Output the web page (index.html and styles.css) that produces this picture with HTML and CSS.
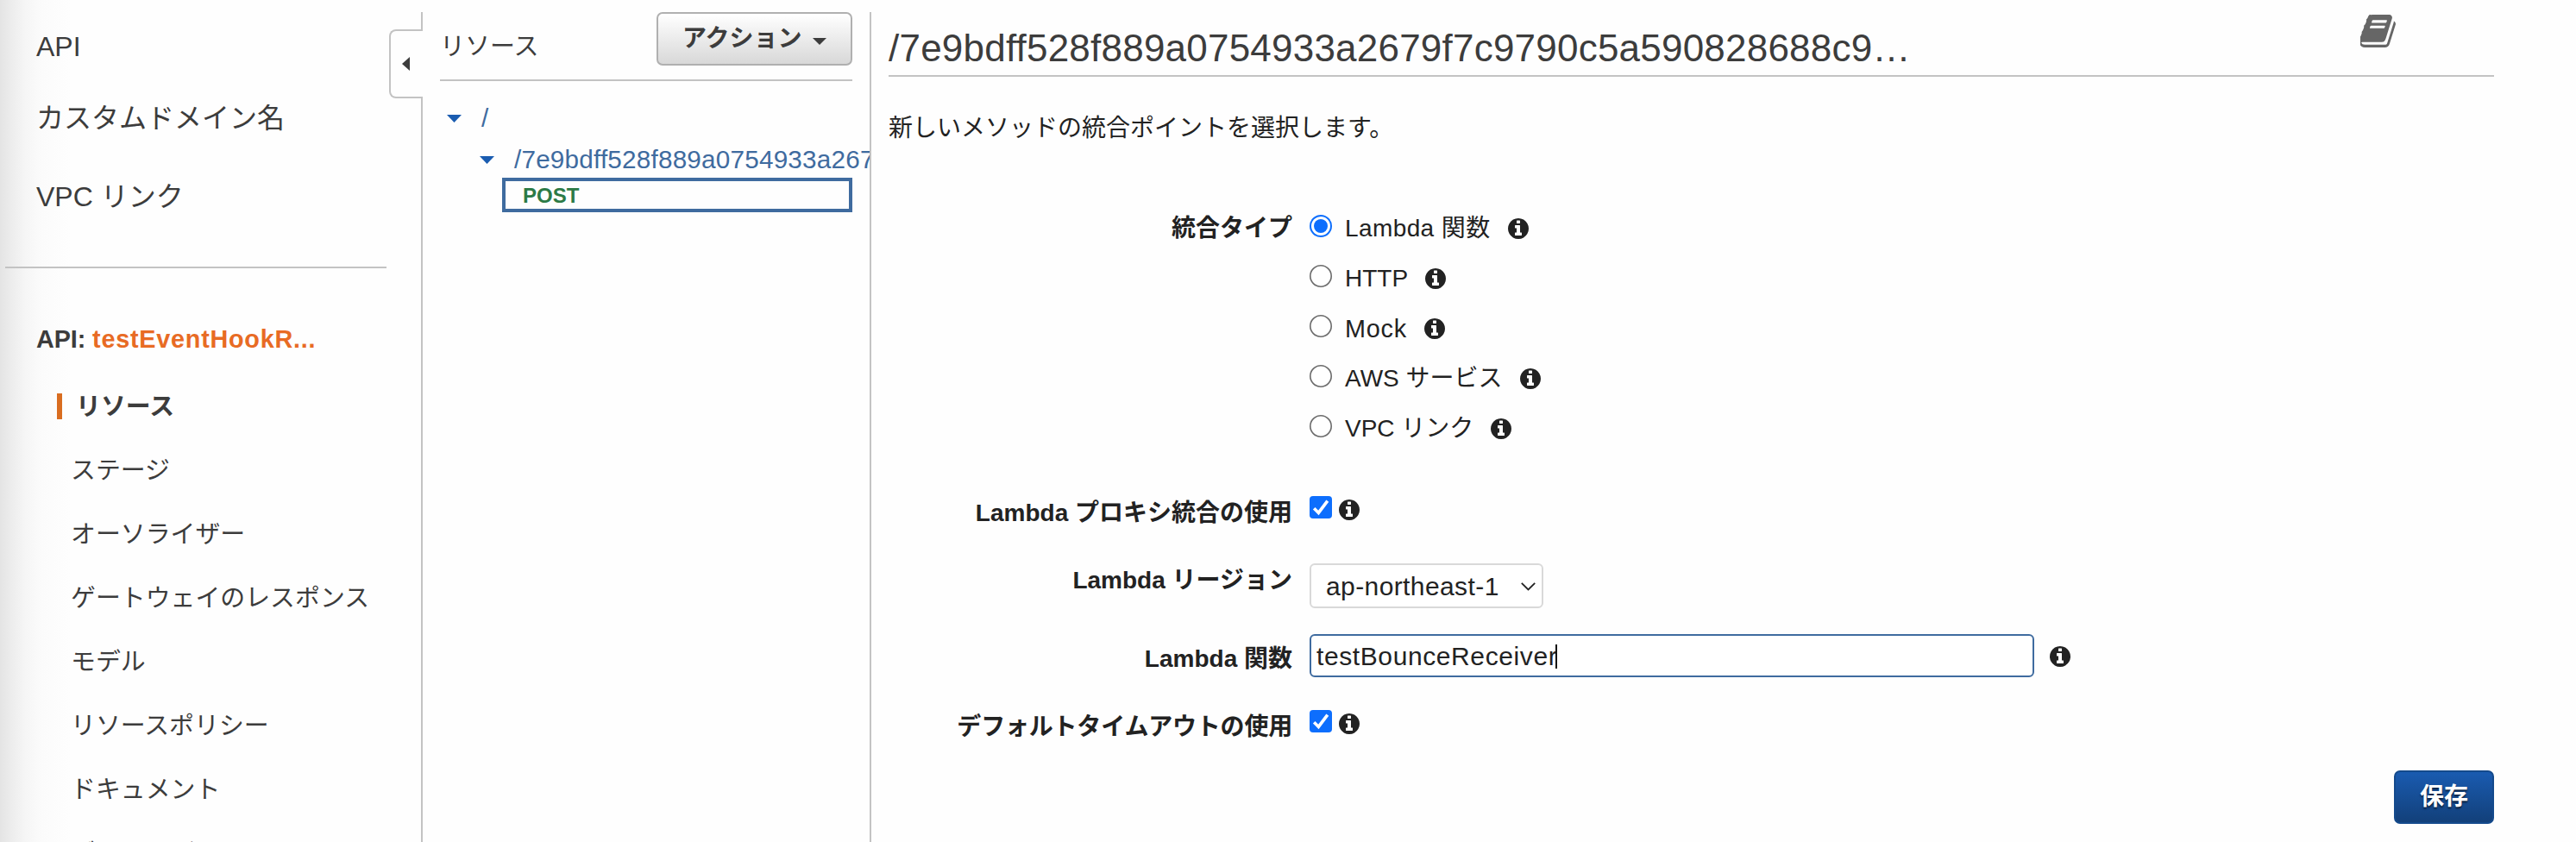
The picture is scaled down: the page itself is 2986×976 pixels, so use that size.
FILE: index.html
```html
<!DOCTYPE html>
<html lang="ja">
<head>
<meta charset="utf-8">
<title>API Gateway</title>
<link rel="stylesheet" href="styles.css">
</head>
<body>
<svg class="defs" aria-hidden="true">
  <symbol id="info" viewBox="128 128 1536 1536"><path d="M1152 1376v-160q0-14-9-23t-23-9h-96v-512q0-14-9-23t-23-9h-320q-14 0-23 9t-9 23v160q0 14 9 23t23 9h96v320h-96q-14 0-23 9t-9 23v160q0 14 9 23t23 9h448q14 0 23-9t9-23zm-128-896v-160q0-14-9-23t-23-9h-192q-14 0-23 9t-9 23v160q0 14 9 23t23 9h192q14 0 23-9t9-23zm640 416q0 209-103 385.5t-279.5 279.5-385.5 103-385.5-103-279.5-279.5-103-385.5 103-385.5 279.5-279.5 385.5-103 385.5 103 279.5 279.5 103 385.5z"/></symbol>
  <symbol id="radio" viewBox="0 0 26 26"><circle cx="13" cy="13" r="12.2" fill="#fff" stroke="#6b6b6b" stroke-width="1.6"/></symbol>
  <symbol id="radio-on" viewBox="0 0 26 26"><circle cx="13" cy="13" r="12" fill="#fff" stroke="#0d6efd" stroke-width="2"/><circle cx="13" cy="13" r="8" fill="#0d6efd"/></symbol>
  <symbol id="check" viewBox="0 0 26 26"><rect width="26" height="26" rx="4" fill="#0d6efd"/><path d="M5.2 14.2l5.2 5.2L20.8 5.6" fill="none" stroke="#fff" stroke-width="3.6"/></symbol>
</svg>
<div class="app">
  <nav class="sidebar">
    <ul class="top-links">
      <li>API</li>
      <li>カスタムドメイン名</li>
      <li>VPC リンク</li>
    </ul>
    <div class="api-name">API: <span class="api-id">testEventHookR...</span></div>
    <ul class="api-links">
      <li class="active">リソース</li>
      <li>ステージ</li>
      <li>オーソライザー</li>
      <li>ゲートウェイのレスポンス</li>
      <li>モデル</li>
      <li>リソースポリシー</li>
      <li>ドキュメント</li>
      <li>ダッシュボード</li>
    </ul>
  </nav>
  <div class="rail">
    <div class="rail-top"></div>
    <div class="tab"><svg width="9" height="16" viewBox="0 0 9 16"><path d="M9 0v16L0 8z" fill="#3c3c3c"/></svg></div>
    <div class="rail-rest"></div>
  </div>
  <section class="resources">
    <header class="res-head">
      <span class="res-title">リソース</span>
      <button class="action">アクション<svg width="16" height="8" viewBox="0 0 16 8"><path d="M0 0h16L8 8z" fill="#3c3c3c"/></svg></button>
    </header>
    <div class="tree">
      <div class="node"><svg class="caret" viewBox="0 0 17 9"><path d="M0 0h17L8.500 9z"/></svg><span>/</span></div>
      <div class="node child"><svg class="caret" viewBox="0 0 17 9"><path d="M0 0h17L8.500 9z"/></svg><span class="path">/7e9bdff528f889a0754933a267</span></div>
      <div class="method">POST</div>
    </div>
  </section>
  <main class="main">
    <header class="main-head">
      <h1>/7e9bdff528f889a0754933a2679f7c9790c5a590828688c9…</h1>
      <svg class="book" viewBox="62 128 1604 1536" preserveAspectRatio="none"><path d="M1639 478q40 57 18 129l-275 906q-19 64-76.500 107.500t-122.500 43.500h-923q-77 0-148.500-53.500t-99.500-131.500q-24-67-2-127 0-4 3-27t4-37q1-8-3-21.500t-3-19.500q2-11 8-21t16.500-23.500 16.500-23.500q23-38 45-91.500t30-91.500q3-10 .5-30t-.5-28q3-11 17-28t17-23q21-36 42-92t25-90q1-9-2.500-32t.5-28q4-13 22-30.500t22-22.500q19-26 42.500-84.500t27.500-96.500q1-8-3-25.500t-2-26.500q2-8 9-18t18-23 17-21q8-12 16.500-30.500t15-35 16-36 19.500-32 26.500-23.500 36-11.500 47.500 5.500l-1 3q38-9 51-9h761q74 0 114 56t18 130l-274 906q-36 119-71.500 153.500t-128.500 34.500h-869q-27 0-38 15-11 16-1 43 24 70 144 70h923q29 0 56-15.500t35-41.500l300-987q7-22 5-57 38 15 59 43zm-1064 2q-4 13 2 22.500t20 9.500h608q13 0 25.500-9.500t16.500-22.500l21-64q4-13-2-22.500t-20-9.500h-608q-13 0-25.500 9.500t-16.500 22.500zm-83 256q-4 13 2 22.500t20 9.500h608q13 0 25.500-9.500t16.500-22.500l21-64q4-13-2-22.500t-20-9.500h-608q-13 0-25.500 9.500t-16.500 22.500z"/></svg>
    </header>
    <p class="lead">新しいメソッドの統合ポイントを選択します。</p>
    <form class="form">
      <div class="row types">
        <label>統合タイプ</label>
        <div class="options">
          <div class="option"><svg class="box"><use href="#radio-on"/></svg><span class="cap-lambda">Lambda 関数</span><svg class="info"><use href="#info"/></svg></div>
          <div class="option"><svg class="box"><use href="#radio"/></svg><span>HTTP</span><svg class="info"><use href="#info"/></svg></div>
          <div class="option"><svg class="box"><use href="#radio"/></svg><span class="cap-mock">Mock</span><svg class="info"><use href="#info"/></svg></div>
          <div class="option"><svg class="box"><use href="#radio"/></svg><span>AWS サービス</span><svg class="info"><use href="#info"/></svg></div>
          <div class="option"><svg class="box"><use href="#radio"/></svg><span>VPC リンク</span><svg class="info"><use href="#info"/></svg></div>
        </div>
      </div>
      <div class="row proxy">
        <label>Lambda プロキシ統合の使用</label>
        <svg class="box"><use href="#check"/></svg><svg class="info"><use href="#info"/></svg>
      </div>
      <div class="row region">
        <label>Lambda リージョン</label>
        <div class="select"><span>ap-northeast-1</span><svg width="17" height="10" viewBox="0 0 17 10"><path d="M.8.8l7.700 7.700L16.200.8" fill="none" stroke="#222" stroke-width="1.800"/></svg></div>
      </div>
      <div class="row function">
        <label>Lambda 関数</label>
        <div class="field"><span>testBounceReceiver</span><i class="cursor"></i></div><svg class="info"><use href="#info"/></svg>
      </div>
      <div class="row timeout">
        <label>デフォルトタイムアウトの使用</label>
        <svg class="box"><use href="#check"/></svg><svg class="info"><use href="#info"/></svg>
      </div>
    </form>
    <button class="save">保存</button>
  </main>
</div>
</body>
</html>
```

FILE: styles.css
```css
* { box-sizing: border-box; }
body {
  margin: 0;
  background: #fefefe;
  color: #222;
  font: 28px/40px "Liberation Sans", "Noto Sans CJK JP", sans-serif;
}
ul { list-style: none; margin: 0; padding: 0; }
svg { display: block; flex: none; }
button { font: inherit; font-weight: bold; padding: 0; }
.defs { position: absolute; width: 0; height: 0; }
.app {
  display: flex;
  width: 2986px;
  height: 976px;
  overflow: hidden;
  white-space: nowrap;
  background: linear-gradient(90deg, #e4e4e4 0, #ededed 14px, #f6f6f6 30px, #fbfbfb 48px, #fefefe 82px);
}

.sidebar { width: 451px; color: #3c3c3c; }
.top-links {
  margin: 0 3px 0 6px;
  padding: 34px 0 0 36px;
  height: 311px;
  border-bottom: 2px solid #c3c3c3;
  font-size: 32px;
}
.top-links li { margin-bottom: 43px; }
.top-links li:nth-child(2) { margin-bottom: 51px; }
.api-name {
  margin: 62px 0 0 42px;
  font-size: 28.8px;
  font-weight: bold;
  letter-spacing: -.1px;
}
.api-id { color: #e86b24; letter-spacing: .75px; }
.api-links { padding-top: 43px; font-size: 28.9px; }
.api-links li { height: 74px; line-height: 74px; padding-left: 82px; }
.api-links .active {
  margin: 0 0 22px 66px;
  height: 30px;
  line-height: 30px;
  padding-left: 16px;
  border-left: 6px solid #d96d20;
  font-weight: bold;
}

.rail { width: 39px; display: flex; flex-direction: column; padding-top: 14px; }
.rail-top { height: 20px; border-right: 2px solid #c3c3c3; }
.tab {
  height: 80px;
  border: 2px solid #c3c3c3;
  border-right: 0;
  border-radius: 8px 0 0 8px;
  display: flex;
  align-items: center;
  padding-left: 13px;
}
.rail-rest { flex: 1; border-right: 2px solid #c3c3c3; }

.resources {
  width: 520px;
  margin-top: 14px;
  padding-left: 20px;
  border-right: 2px solid #c3c3c3;
  overflow: hidden;
}
.res-head {
  width: 478px;
  height: 80px;
  border-bottom: 2px solid #c3c3c3;
  display: flex;
  justify-content: space-between;
  color: #3c3c3c;
}
.res-title { margin-top: 20px; font-size: 29px; }
.action {
  width: 227px;
  height: 62px;
  border: 2px solid #b0b0b0;
  border-radius: 7px;
  background: linear-gradient(#fff, #d8d8d8);
  color: #3c3c3c;
  display: flex;
  align-items: center;
  padding: 0 0 0 28px;
  gap: 12px;
}
.action svg { margin-top: 6px; }
.tree { padding-top: 19px; color: #3f6b9f; font-size: 29.7px; }
.node { display: flex; align-items: center; height: 48px; padding-left: 8px; gap: 23px; line-height: 40px; }
.node.child { padding-left: 46px; }
.path { letter-spacing: .2px; }
.caret { width: 17px; height: 9px; fill: #1a5cb0; }
.method {
  margin: -3px 0 0 72px;
  width: 406px;
  height: 40px;
  border: 4px solid #3f6b9f;
  padding-left: 20px;
  font-size: 24px;
  line-height: 33px;
  font-weight: bold;
  color: #2c7a46;
}

.main { width: 1861px; margin-left: 20px; display: flex; flex-direction: column; }
.main-head {
  height: 89px;
  border-bottom: 2px solid #c3c3c3;
  display: flex;
  justify-content: space-between;
}
h1 {
  margin: 31px 0 0;
  font-size: 44px;
  line-height: 50px;
  font-weight: normal;
  color: #3c3c3c;
  letter-spacing: .22px;
}
.book { width: 41px; height: 38px; margin: 17px 114px 0 0; fill: #666; }
.lead { margin: 40px 0 67px; }
.row { display: flex; }
.row label {
  width: 468px;
  margin-right: 20px;
  text-align: right;
  font-weight: bold;
}
.types { height: 339px; }
.types label { line-height: 58px; }
.option { display: flex; align-items: center; height: 58px; }
.option span { margin: 0 20px 0 15px; }
.option .box { margin-bottom: 6px; }
.option .cap-lambda { letter-spacing: .4px; }
.option .cap-mock { font-size: 28.8px; letter-spacing: .8px; }
.box { width: 26px; height: 26px; }
.info { width: 24px; height: 24px; fill: #222; }
.proxy { height: 78px; }
.proxy .info, .timeout .info { margin: 4px 0 0 8px; }
.region { height: 82px; }
.select {
  width: 271px;
  height: 52px;
  border: 2px solid #d9d9d9;
  border-radius: 6px;
  background: #fff;
  display: flex;
  align-items: center;
  justify-content: space-between;
  padding: 1px 7px 0 17px;
  font-size: 30px;
  letter-spacing: .4px;
}
.function { height: 88px; }
.function label { line-height: 57px; }
.field {
  width: 840px;
  height: 50px;
  border: 2px solid #3f6b9f;
  border-radius: 6px;
  background: #fff;
  display: flex;
  align-items: center;
  padding: 1px 0 0 6px;
  font-size: 30px;
  letter-spacing: .6px;
}
.cursor { width: 2px; height: 28px; background: #111; margin-left: -2px; }
.function .info { margin: 14px 0 0 18px; }
.timeout { height: 70px; }
.timeout label { letter-spacing: -.2px; }
.save {
  align-self: flex-end;
  width: 116px;
  height: 62px;
  border: 2px solid #144a8c;
  border-radius: 7px;
  background: linear-gradient(#1a5cb2, #123f78) border-box;
  color: #fff;
  text-shadow: 0 2px 2px rgba(0, 0, 0, .6);
}
```
